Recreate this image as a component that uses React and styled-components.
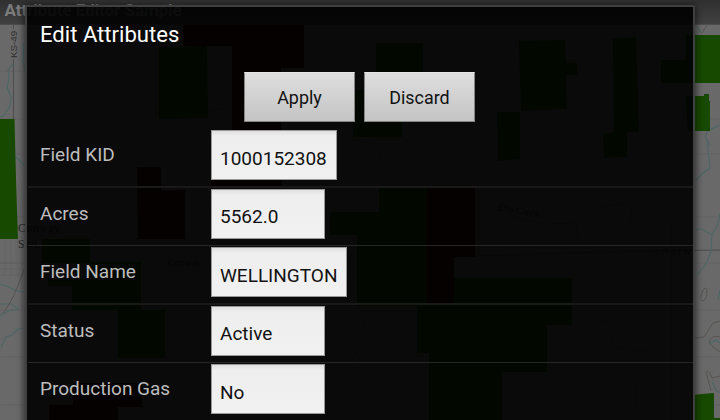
import React from "react";
import styled, { createGlobalStyle } from "styled-components";

const GlobalStyle = createGlobalStyle`
  * { box-sizing: border-box; }
  html, body { margin: 0; overflow: hidden; background: #666; }
`;

const Screen = styled.main`
  position: relative;
  width: 720px;
  height: 420px;
  overflow: hidden;
  display: flex;
  flex-direction: column;
  font-family: Roboto, "Liberation Sans", sans-serif;
`;

const AppBar = styled.header`
  flex: 0 0 25px;
  padding-left: 4.5px;
  background: linear-gradient(#303030, #404040);
  border-bottom: 1px solid #4c4c4c;
  color: #7c7c7c;
  font-size: 16.9px;
  font-weight: 700;
  line-height: 21px;
`;

const MapDrawing = styled.svg`
  flex: 1;
  width: 720px;
  display: block;
  background: #696969;
`;

const Dialog = styled.section`
  position: absolute;
  left: 25px;
  top: 5px;
  width: 670px;
  height: 440px;
  padding: 0 0 0 1px;
  border: 2px solid #404040;
  border-radius: 2px;
  background: rgba(0, 0, 0, 0.9);
  background-clip: padding-box;
  box-shadow: 0 1px 7px 1px rgba(0, 0, 0, 0.6);
`;

const Title = styled.h1`
  height: 54px;
  margin: 0;
  padding-left: 12px;
  color: #fff;
  font-size: 22.1px;
  font-weight: 400;
  line-height: 54px;
`;

const Actions = styled.div`
  display: flex;
  justify-content: center;
  gap: 9px;
  height: 68px;
  padding: 11px 2px 0 0;
`;

const ActionButton = styled.button`
  width: 111px;
  height: 50px;
  padding: 1px 0 0;
  border: 1px solid #858585;
  border-top-color: #e6e6e6;
  background: linear-gradient(#dedede, #c4c4c4);
  color: #111;
  font: 400 17.9px Roboto, sans-serif;
`;

const Row = styled.div`
  display: grid;
  grid-template-columns: 171px 1fr;
  height: 58.5px;
  width: 665px;
  padding: 1px 0 0 12px;
  border-bottom: ${({ $thick }) => ($thick ? "2px solid #191919" : "1px solid #262626")};
`;

const Label = styled.label`
  align-self: start;
  margin-top: 14px;
  color: #bdbdbd;
  font-size: 19px;
  line-height: 21px;
`;

const Field = styled.input`
  width: ${({ $width }) => $width}px;
  height: 50px;
  padding: 6.4px 0 0 8px;
  border: 1px solid #999;
  border-radius: 0;
  outline: 0;
  background: linear-gradient(#dfdfdf, #eee 5px, #f1f1f1);
  color: #111;
  font: 400 19px Roboto, sans-serif;
`;

const rows = [
  { label: "Field KID", value: "1000152308", width: 126 },
  { label: "Acres", value: "5562.0", width: 114 },
  { label: "Field Name", value: "WELLINGTON", width: 136 },
  { label: "Status", value: "Active", width: 114 },
  { label: "Production Gas", value: "No", width: 114 },
];

function FieldMap() {
  return (
    <MapDrawing viewBox="0 25 720 395" preserveAspectRatio="none">
      <g fill="none" stroke="#606060" strokeWidth="1">
        <path d="M0 71H720M0 119H720M0 154H720M0 217H720M0 263H720M0 310H720M0 357H720M0 405H720M63 25V420M110 25V420M157 25V420M205 25V420M352 25V420M400 25V420M546 25V420M591 25V420M641 25V420" opacity=".65" />
        <path d="M13.5 25V29M13.5 59V126" stroke="#4c4c4c" />
        <path d="M480 256L602 252L720 250M671 220V420" stroke="#4c4c4c" />
        <path d="M0 263H24M0 269H24M0 275H24M5 239V275M11 239V275M17 239V275" opacity=".5" />
        <path d="M22 243V420" strokeWidth="2" opacity=".4" />
      </g>
      <g fill="none" stroke="#4b6664" strokeWidth="1.1">
        <path d="M13 64L8 70L9 79L7 87L11 97L10 106L3 116L0 117M24 43L23 61L26 72M16 157L25 166" />
        <path d="M0 284L9 287L17 291L24 292M0 304L11 304L19 309M1 347L6 337L12 335L18 329L24 328M0 316L8 311L19 309" />
        <path d="M707 140L708 150L710 168L703 173L696 180L694 179M720 214L718 224L712 235L702 229L695 230M712 235L711 252L706 264L697 275M720 125L709 130L705 136L710 145M700 32L697 26" />
        <path d="M709 344L716 340L720 343M712 382L716 390L720 393M720 290L718 300" />
      </g>
      <g fill="none" stroke="#575450" strokeWidth="1">
        <path d="M24 269Q14 300 3 313M707 25L702 33M702 293Q705 284 707 291Q707 299 703 301Q699 300 702 293M695 338L704 337L713 323L720 321M720 352L713 347L709 343Q711 334 720 337M706 372Q708 368 712 378L720 376M706 372L711 391" />
        <path d="M30 116L52 99L70 108L84 78M133 107L160 113L194 116L236 105M385 169L375 145L365 142M495 190L512 216L540 224L576 223L578 240M564 140Q565 158 580 166L597 170M582 219Q598 205 615 205T640 182M633 203L629 226L622 240M585 313L596 320L615 323L612 345L630 350L652 350M600 385L620 370L637 384L635 410M360 315L365 324L357 350L346 373" />
      </g>
      <g fill="#184900">
        <path d="M0 119H14.5L16 180L18 239H0Z" />
        <path d="M159 47L207 46L208 118L159 119ZM376 43H423V72H376ZM519 41L565 40L566 63H577V75H566L567 109L521 111ZM613 39L636 37L639 132H627V157L604 158L603 134L614 132ZM686 35H720V83H661V60H686ZM686 96H704V94H709V101H710V131H688ZM497 112H520V159L498 161Z" />
        <path d="M353 90H385V112H402V137H353ZM42 239H90V263H42ZM379 187H427V350L417 306H357V235H330V212H379ZM90 262H141V310H165V358H118V310H72V286H48V279H90ZM427 257H454V278H572V325H547V372H502V420H429V353H417V306H427Z" />
        <path d="M693 395L702 394L714 393V418H720V420H693Z" />
      </g>
      <g fill="#301000">
        <path d="M183 25H304V68H281V93H281V137H232V94H232V70H232V46H183ZM137 167H161V191L185 190V239H138ZM427 187H475V257H454V305H427ZM211 179H282V187H211ZM73 383H142V407H118V420H49V405H73Z" />
      </g>
      <g fill="#303030" fontFamily="Liberation Sans, sans-serif">
        <text x="0" y="0" fontSize="9.8" transform="translate(17 58) rotate(-90)">KS-49</text>
        <text x="655" y="255" fontSize="9">CR-84 N</text>
        <g fontFamily="Liberation Serif, serif" fill="#282828">
          <text x="18" y="232" fontSize="11.5" letterSpacing=".7">Conway</text>
          <text x="18" y="248" fontSize="11.5">Spri.</text>
          <text x="168" y="266" fontSize="10">Conway</text>
          <text x="497" y="210" fontSize="10" fontStyle="italic" transform="rotate(10 497 210)">Elm Creek</text>
        </g>
      </g>
    </MapDrawing>
  );
}

export default function App() {
  return (
    <>
      <GlobalStyle />
      <Screen>
        <AppBar>Attribute Editor Sample</AppBar>
        <FieldMap />
        <Dialog role="dialog" aria-label="Edit Attributes">
          <Title>Edit Attributes</Title>
          <Actions>
            <ActionButton>Apply</ActionButton>
            <ActionButton>Discard</ActionButton>
          </Actions>
          {rows.map(({ label, value, width }, index) => (
            <Row key={label} $thick={index % 2 === 0}>
              <Label htmlFor={label}>{label}</Label>
              <Field id={label} $width={width} value={value} readOnly />
            </Row>
          ))}
        </Dialog>
      </Screen>
    </>
  );
}
